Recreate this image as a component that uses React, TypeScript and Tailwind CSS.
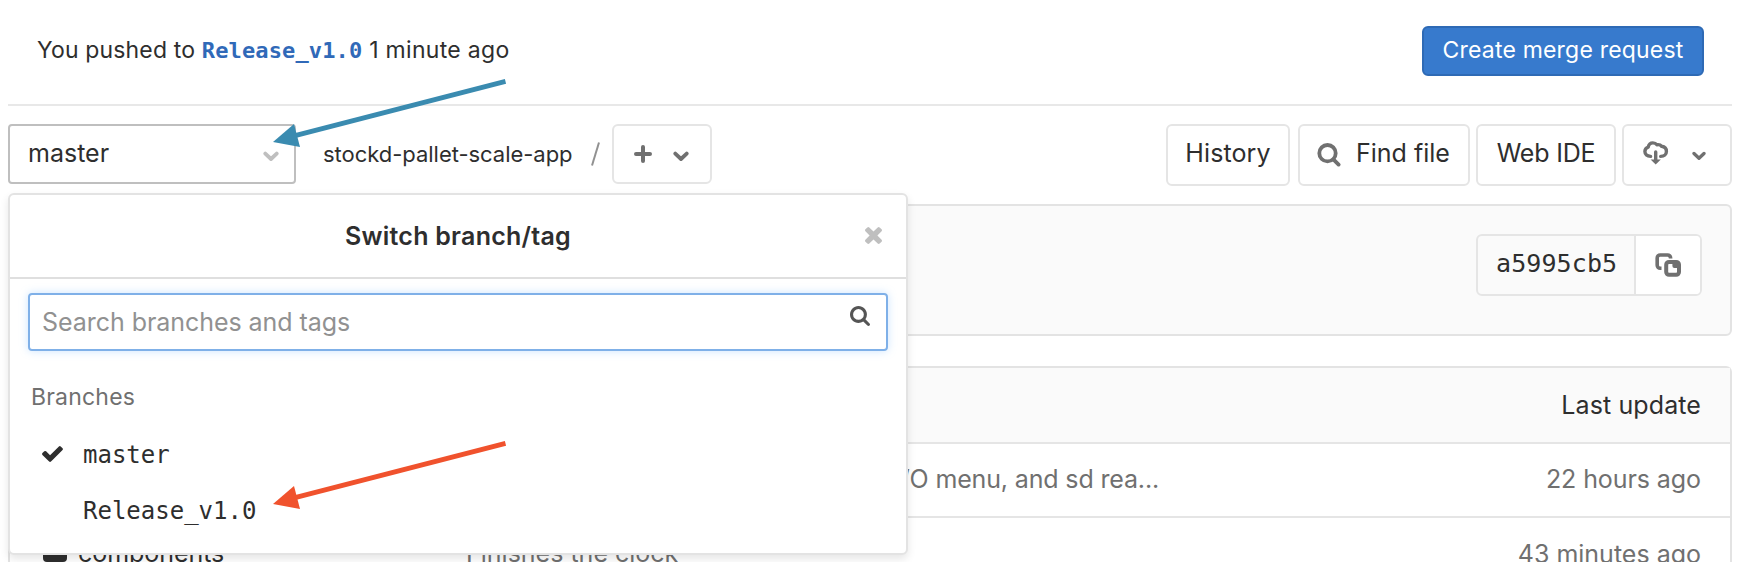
import type { ReactNode } from "react";

function Chevron({ className }: { className: string }) {
  return (
    <svg viewBox="0 0 16 11" className={className} fill="none" stroke="currentColor" strokeWidth="3.800" strokeLinecap="round" strokeLinejoin="round">
      <path d="M2.300 2.600 8 8 13.700 2.600" />
    </svg>
  );
}

function PlusIcon() {
  return (
    <svg viewBox="0 0 18 18" className="h-[18px] w-[18px]" fill="none" stroke="currentColor" strokeWidth="4" strokeLinecap="round">
      <path d="M9 2v14M2 9h14" />
    </svg>
  );
}

function FindIcon() {
  return (
    <svg viewBox="0 0 24 24" className="h-6 w-6" fill="none" stroke="currentColor" strokeWidth="3.800">
      <circle cx="10.500" cy="10.200" r="8.200" />
      <path d="m16.600 16.600 5 5" strokeLinecap="round" />
    </svg>
  );
}

function CloudDownloadIcon() {
  return (
    <svg viewBox="0 0 26 24" className="h-6 w-[26px]" fill="none" stroke="currentColor" strokeWidth="3.400" strokeLinecap="round" strokeLinejoin="round">
      <path d="M7.600 15.400C4 15.300 1.900 13.300 1.900 10.600c0-2.200 1.300-3.900 3.300-4.500C5.700 3.500 7.600 1.900 9.900 1.900c1.700 0 3.100.7 4 1.900 2-.4 3.600.1 4.800 1.500 2.800.4 4.700 2.400 4.700 5.100 0 3-2.300 5-5.700 5" />
      <path d="M12.700 11v8" />
      <path d="M7.600 18.600h10.200l-5.100 4.800z" fill="currentColor" stroke="none" />
    </svg>
  );
}

function CopyIcon() {
  return (
    <svg viewBox="0 0 26 24" className="h-6 w-[26px]" fill="none" stroke="currentColor" strokeWidth="3.600">
      <path d="M15.600 5.400V5a3 3 0 0 0-3-3H5.200a3 3 0 0 0-3 3v7.300a3 3 0 0 0 3 3h1.300" />
      <rect x="11.200" y="8.900" width="12.800" height="12.900" rx="2.800" strokeWidth="4" />
      <path d="M17.400 8.500h6.400v6.400h-4.400a2 2 0 0 1-2-2z" fill="currentColor" stroke="none" />
    </svg>
  );
}

function CheckIcon() {
  return (
    <svg viewBox="121 334 1550 1188" className="h-4 w-[21px]" fill="currentColor">
      <path d="M1671 566q0 40-28 68l-724 724-136 136q-28 28-68 28t-68-28l-136-136-362-362q-28-28-28-68t28-68l136-136q28-28 68-28t68 28l294 295 656-657q28-28 68-28t68 28l136 136q28 28 28 68z" />
    </svg>
  );
}

function SearchIcon() {
  return (
    <svg viewBox="64 128 1664 1664" className="h-5 w-5" fill="currentColor">
      <path d="M1216 832q0-185-131.500-316.500t-316.500-131.500-316.500 131.500-131.500 316.500 131.500 316.500 316.500 131.500 316.500-131.500 131.500-316.500zm512 832q0 52-38 90t-90 38q-54 0-90-38l-343-342q-179 124-399 124-143 0-273.500-55.500t-225-150-150-225-55.500-273.500 55.500-273.500 150-225 225-150 273.500-55.500 273.500 55.500 225 150 150 225 55.500 273.500q0 220-124 399l343 343q37 37 37 90z" />
    </svg>
  );
}

function CloseIcon() {
  return (
    <svg viewBox="302 366 1188 1188" className="h-[17px] w-[17px]" fill="currentColor">
      <path d="M1490 1322q0 40-28 68l-136 136q-28 28-68 28t-68-28l-294-294-294 294q-28 28-68 28t-68-28l-136-136q-28-28-28-68t28-68l294-294-294-294q-28-28-28-68t28-68l136-136q28-28 68-28t68 28l294 294 294-294q28-28 68-28t68 28l136 136q28 28 28 68t-28 68l-294 294 294 294q28 28 28 68z" />
    </svg>
  );
}

function FolderIcon() {
  return (
    <svg viewBox="0 0 24 20" className="h-5 w-6" fill="currentColor">
      <path d="M0 4a4 4 0 0 1 4-4h4a4 4 0 0 1 4 3h8a4 4 0 0 1 4 4v9a4 4 0 0 1-4 4H4a4 4 0 0 1-4-4z" />
    </svg>
  );
}

function Arrow({ className }: { className: string }) {
  return (
    <svg viewBox="0 0 240 72" className={className} fill="currentColor">
      <path d="M3 63 24 45 30 68z" />
      <path d="M26 56.400 235.500 2.400" stroke="currentColor" strokeWidth="4.800" fill="none" />
    </svg>
  );
}

function ToolButton({ className, children }: { className: string; children: ReactNode }) {
  return (
    <button className={`flex h-[62px] shrink-0 items-center rounded-md border-2 border-[#e5e5e5] bg-white ${className}`}>{children}</button>
  );
}

function BranchDropdown() {
  return (
    <div className="absolute left-0 top-[87px] z-10 h-[362px] w-[900px] rounded-md border-2 border-[#e3e3e3] bg-white shadow-[0_4px_8px_rgba(0,0,0,0.1)]">
      <div className="flex h-[84px] items-center border-b-2 border-[#dfdfdf] pr-6">
        <div className="flex-1 pb-[1px] pl-[41px] text-center text-[25px] font-semibold leading-8 tracking-[0.25px]">Switch branch/tag</div>
        <span className="pb-[1px] text-[#bfbfbf]"><CloseIcon /></span>
      </div>
      <div className="mx-[18px] mt-[14px] flex h-[58px] items-start justify-between rounded border-2 border-[#7fb0e8] pl-3 pr-4 pt-[11px] shadow-[0_0_8px_rgba(128,189,255,0.4)]">
        <span className="text-[25px] leading-8 tracking-[-0.05px] text-[#919191]">Search branches and tags</span>
        <span className="text-[#555]"><SearchIcon /></span>
      </div>
      <div className="mt-[30px] pl-[21px] text-[23px] leading-8 tracking-[0.2px] text-[#707070]">Branches</div>
      <div className="mt-[26px] flex h-8 items-center pl-8">
        <span className="w-[41px] pb-0.5"><CheckIcon /></span>
        <span className="font-['DejaVu_Sans_Mono',monospace] text-[24px] leading-8">master</span>
      </div>
      <div className="mt-6 flex h-8 items-center pl-[73px]">
        <span className="font-['DejaVu_Sans_Mono',monospace] text-[24px] leading-8">Release_v1.0</span>
      </div>
    </div>
  );
}

export default function App() {
  return (
    <div className="relative h-[562px] w-[1738px] overflow-hidden bg-white pl-2 pr-1.5 font-[Inter,sans-serif] text-[#2e2e2e]">
      <header className="flex h-[106px] items-start justify-between border-b-2 border-[#e8e8e8] pl-[29px] pr-7 pt-[26px]">
        <p className="whitespace-pre pt-2 text-[23px] leading-8">
          <span className="tracking-[0.15px]">You pushed to </span><a className="font-['DejaVu_Sans_Mono',monospace] text-[22px] font-bold tracking-[0.14px] text-[#3069b8]">Release_v1.0</a><span className="tracking-[0.3px]"> 1 minute ago</span>
        </p>
        <button className="flex h-[50px] w-[282px] items-center justify-center rounded-md border-2 border-[#2e6ab5] bg-[#377acd] pb-[3px] text-[23px] leading-8 tracking-[0.2px] text-white">
          Create merge request
        </button>
      </header>

      <div className="relative flex h-[98px] items-start pt-[18px]">
        <button className="flex h-[60px] w-[288px] items-center justify-between rounded border-2 border-[#bfbfbf] pl-[18px] pr-[15px] text-[25px] leading-8">
          <span className="pb-[3px]">master</span>
          <Chevron className="mt-1 h-[11px] w-4 text-[#bfbfbf]" />
        </button>
        <div className="flex h-[60px] items-center pl-[27px] text-[22px] leading-8">
          <span className="w-[268px] tracking-[-0.03px]">stockd-pallet-scale-app</span>
          <svg viewBox="0 0 9 24" className="h-6 w-[9px] text-[#919191]" fill="none" stroke="currentColor" strokeWidth="2"><path d="M1 23.500 8 .5" /></svg>
        </div>
        <button className="ml-3 flex h-[60px] w-[100px] items-center rounded-md border-2 border-[#e5e5e5] pl-5 text-[#707070]">
          <PlusIcon />
          <Chevron className="ml-[21px] mt-1 h-[11px] w-4" />
        </button>
        <div className="ml-auto flex text-[25px] leading-8">
          <ToolButton className="w-[124px] justify-center pb-[5px] tracking-[0.1px]">History</ToolButton>
          <ToolButton className="ml-2 w-[172px] pl-[17px]">
            <span className="text-[#707070]"><FindIcon /></span>
            <span className="ml-[15px] pb-[5px]">Find file</span>
          </ToolButton>
          <ToolButton className="ml-1.5 w-[140px] justify-center pb-[5px] tracking-[-0.2px]">Web IDE</ToolButton>
          <ToolButton className="ml-1.5 w-[110px] pl-[19px] text-[#707070]">
            <span className="pb-[5px]"><CloudDownloadIcon /></span>
            <Chevron className="ml-[23px] mt-0.5 h-[10px] w-[14px]" />
          </ToolButton>
        </div>
        <BranchDropdown />
      </div>

      <section className="flex h-[132px] items-start justify-end rounded-md border-2 border-[#e3e3e3] bg-[#fafafa] pr-7 pt-7">
        <div className="flex h-[62px] w-[226px] overflow-hidden rounded-md border-2 border-[#e5e5e5]">
          <span className="flex w-[158px] items-center border-r-2 border-[#e5e5e5] pb-[2px] pl-[18px] font-['DejaVu_Sans_Mono',monospace] text-[25px] leading-8 tracking-[0.1px]">a5995cb5</span>
          <span className="flex flex-1 items-center bg-white pl-[19px] text-[#707070]"><CopyIcon /></span>
        </div>
      </section>

      <section className="mt-[30px] h-[230px] rounded-t-md border-2 border-b-0 border-[#e3e3e3] text-[25px] leading-8">
        <div className="flex h-[76px] items-center justify-end border-b-2 border-[#e5e5e5] bg-[#fafafa] pr-[29px] tracking-[0.1px]">Last update</div>
        <div className="flex h-[74px] items-center justify-between border-b-2 border-[#e5e5e5] pb-[2px] pr-[29px] text-[#707070]">
          <span className="w-[1149px] text-right tracking-[-0.15px]">I/O menu, and sd rea...</span>
          <span className="tracking-[-0.08px]">22 hours ago</span>
        </div>
        <div className="flex h-[72px] items-center pr-[29px] text-[#707070]">
          <span className="w-[35px] pb-1 pl-[33px] text-[#2e2e2e]"><FolderIcon /></span>
          <span className="ml-[33px] w-[388px] pb-0.5 tracking-[-0.05px] text-[#2e2e2e]">components</span>
          <span className="pb-0.5">Finishes the clock</span>
          <span className="ml-auto pb-px">43 minutes ago</span>
        </div>
      </section>

      <Arrow className="pointer-events-none absolute left-[270px] top-[79px] z-20 h-[72px] w-[240px] text-[#3a8bb0]" />
      <Arrow className="pointer-events-none absolute left-[270px] top-[441px] z-20 h-[72px] w-[240px] text-[#f0522d]" />
    </div>
  );
}
